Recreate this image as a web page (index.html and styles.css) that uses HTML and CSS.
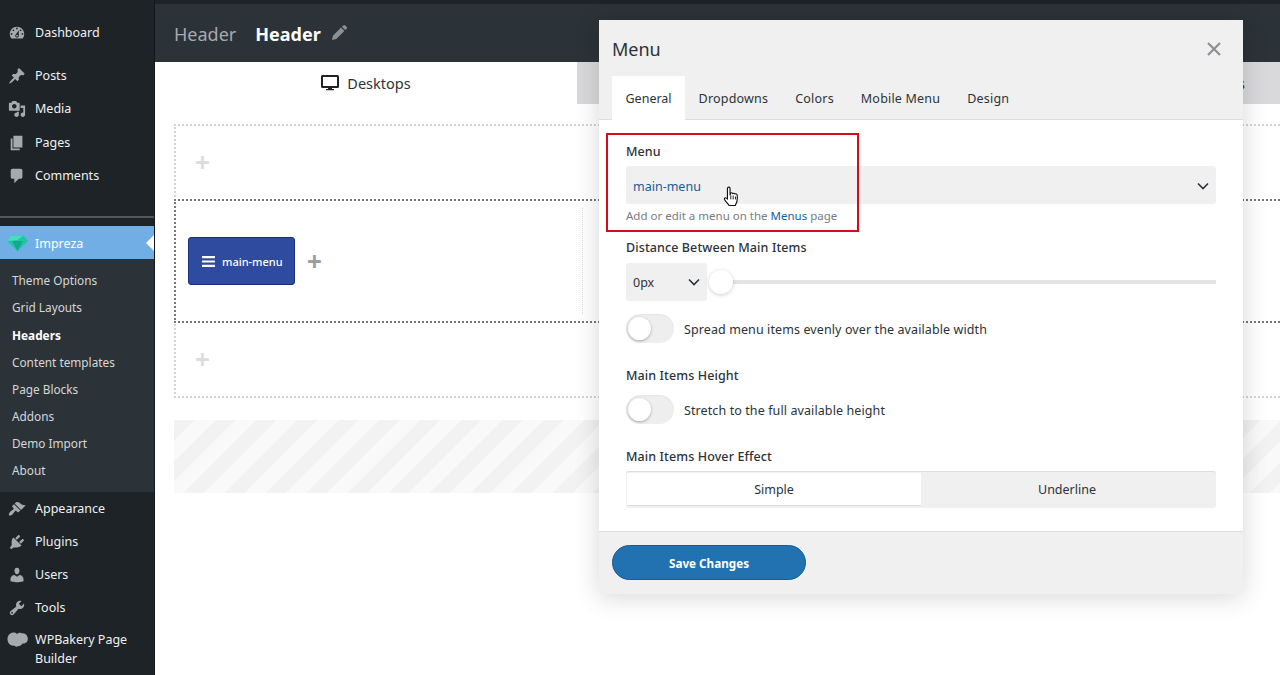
FILE: index.html
```html
<!DOCTYPE html>
<html lang="en">

<head>
    <meta charset="UTF-8">
    <meta name="viewport" content="width=device-width, initial-scale=1.0">
    <title>Header</title>
    <link rel="stylesheet" href="styles.css">
</head>

<body>
    <aside class="sidebar">
        <a class="menu-item dash"><svg class="icon" viewBox="0 0 20 20"><path d="M3.76 16h12.48c1.1-1.37 1.76-3.11 1.76-5 0-4.42-3.58-8-8-8s-8 3.58-8 8c0 1.89.66 3.63 1.76 5zM10 4c.55 0 1 .45 1 1s-.45 1-1 1-1-.45-1-1 .45-1 1-1zM6 6c.55 0 1 .45 1 1s-.45 1-1 1-1-.45-1-1 .45-1 1-1zm8 0c.55 0 1 .45 1 1s-.45 1-1 1-1-.45-1-1 .45-1 1-1zm-5.37 5.55L12 7v6c0 1.1-.9 2-2 2s-2-.9-2-2c0-.57.24-1.08.63-1.45zM4 10c.55 0 1 .45 1 1s-.45 1-1 1-1-.45-1-1 .45-1 1-1zm12 0c.55 0 1 .45 1 1s-.45 1-1 1-1-.45-1-1 .45-1 1-1zm-5 3c0-.55-.45-1-1-1s-1 .45-1 1 .45 1 1 1 1-.45 1-1z" fill-rule="evenodd"/></svg>Dashboard</a>
        <a class="menu-item"><svg class="icon" viewBox="0 0 20 20"><path d="M10.44 3.02l1.82-1.82 6.36 6.35-1.83 1.82c-1.05-.68-2.48-.57-3.41.36l-.75.75c-.92.93-1.04 2.35-.35 3.41l-1.83 1.82-2.41-2.41-2.8 2.79c-.42.42-3.38 2.71-3.8 2.29s1.86-3.39 2.28-3.81l2.79-2.79L4.1 9.36l1.83-1.82c1.05.69 2.48.57 3.4-.36l.75-.75c.93-.92 1.05-2.35.36-3.41z"/></svg>Posts</a>
        <a class="menu-item"><svg class="icon" viewBox="0 0 20 20"><path d="M13 11V4c0-.55-.45-1-1-1h-1.67L9 1H5L3.67 3H2c-.55 0-1 .45-1 1v7c0 .55.45 1 1 1h10c.55 0 1-.45 1-1zM7 4.500c1.38 0 2.500 1.120 2.500 2.500S8.380 9.500 7 9.500 4.500 8.380 4.500 7 5.620 4.500 7 4.500zM14 6h5v10.500c0 1.380-1.120 2.500-2.500 2.500S14 17.880 14 16.500s1.120-2.500 2.500-2.500c.17 0 .34.02.5.05V9h-3V6zm-4 8.050V13h2v3.500c0 1.380-1.120 2.500-2.500 2.500S7 17.880 7 16.500 8.120 14 9.500 14c.17 0 .34.02.5.05z"/></svg>Media</a>
        <a class="menu-item pages"><svg class="icon" viewBox="0 0 20 20"><path d="M6 15V2h10v13H6zm-1 1h8v2H3V5h2v11z"/></svg>Pages</a>
        <a class="menu-item"><svg class="icon" viewBox="0 0 20 20"><path d="M5 2h9c1.1 0 2 .9 2 2v7c0 1.1-.9 2-2 2h-2l-5 5v-5H5c-1.1 0-2-.9-2-2V4c0-1.1.9-2 2-2z"/></svg>Comments</a>
        <div class="menu-sep"></div>
        <a class="menu-item current">
            <svg class="icon gem" viewBox="0 0 20 20" preserveAspectRatio="none"><path d="M4 1h12l4 6-10 12L0 7z" fill="#1fc7a6"/><path d="M5 1h10l-5 5zM0 7l4-6 1 0 5 5z" fill="#4adcc0"/><path d="M10 19L5 7h10z" fill="#12a98f"/></svg>Impreza</a>
        <ul class="submenu">
            <li>Theme Options</li>
            <li>Grid Layouts</li>
            <li class="active">Headers</li>
            <li>Content templates</li>
            <li>Page Blocks</li>
            <li>Addons</li>
            <li>Demo Import</li>
            <li>About</li>
        </ul>
        <a class="menu-item"><svg class="icon" viewBox="0 0 20 20"><path d="M14.48 11.06L7.41 3.99l1.5-1.5c.5-.56 2.3-.47 3.51.32 1.21.8 1.43 1.28 2.91 2.1 1.18.64 2.45 1.26 4.45.85zm-.71.71L6.7 4.7 4.93 6.47c-.39.39-.39 1.02 0 1.41l1.06 1.06c.39.39.39 1.03 0 1.42-.6.6-1.43 1.11-2.21 1.69-.35.26-.7.53-1.01.84-1.43 1.43-2.3 3.5-1.6 4.2s2.77-.17 4.2-1.6c.31-.31.58-.66.84-1.01.58-.78 1.09-1.61 1.69-2.21.39-.39 1.03-.39 1.42 0l1.06 1.06c.39.39 1.02.39 1.41 0z"/></svg>Appearance</a>
        <a class="menu-item"><svg class="icon" viewBox="0 0 20 20"><path d="M13.11 4.36L9.87 7.6 8 5.73l3.24-3.24c.35-.34 1.05-.2 1.56.32.52.51.66 1.21.31 1.55zm-8 1.77l.91-1.12 9.01 9.01-1.19.84c-.71.71-2.63 1.16-3.82 1.16H6.14L4.9 17.26c-.59.59-1.54.59-2.12 0-.59-.58-.59-1.53 0-2.12l1.24-1.24v-3.88c0-1.13.4-3.19 1.09-3.89zm7.26 3.97l3.24-3.24c.34-.35 1.04-.21 1.55.31.52.51.66 1.21.31 1.55l-3.24 3.25z"/></svg>Plugins</a>
        <a class="menu-item"><svg class="icon" viewBox="0 0 20 20"><path d="M10 9.25c-2.27 0-2.73-3.44-2.73-3.44C7 4.02 7.82 2 9.97 2c2.16 0 2.98 2.02 2.71 3.81 0 0-.41 3.44-2.68 3.44zm0 2.57L12.72 10c2.39 0 4.52 2.33 4.52 4.53v2.49s-3.65 1.13-7.24 1.13c-3.65 0-7.24-1.13-7.24-1.13v-2.49c0-2.25 1.94-4.48 4.47-4.48z"/></svg>Users</a>
        <a class="menu-item"><svg class="icon" viewBox="0 0 20 20"><path d="M16.68 9.77c-1.34 1.34-3.3 1.67-4.95.99l-5.41 6.52c-.99.99-2.59.99-3.58 0s-.99-2.59 0-3.57l6.52-5.42c-.68-1.65-.35-3.61.99-4.95 1.28-1.28 3.12-1.62 4.72-1.06l-2.89 2.89 2.82 2.82 2.86-2.87c.53 1.58.18 3.39-1.08 4.65zM3.81 16.21c.4.39 1.04.39 1.43 0 .4-.4.4-1.04 0-1.43-.39-.4-1.03-.4-1.43 0-.39.39-.39 1.03 0 1.43z"/></svg>Tools</a>
        <a class="menu-item tall"><svg class="icon cloud" viewBox="0 0 21 17"><path d="M4.500 1C6.500.2 8.500.6 10 2c1.300-1.300 3.500-1.800 5-.8 1.800-.3 3.800.6 4.800 2.200 1.300 2 1.400 4.300.3 6-1 1.600-2.800 2.300-4.600 2-1 1.800-2.800 2.800-4.500 2.800-1.600.9-3 .4-4-.6-2 .2-4.200-.6-5.300-2.300C.4 9.300.2 7 .8 5 1.300 3 2.700 1.600 4.500 1z"/></svg><span>WPBakery Page<br>Builder</span></a>
    </aside>

    <main class="content">
        <header class="page-head">
            <span class="head-label">Header</span>
            <strong class="head-title">Header</strong>
            <svg class="pencil" viewBox="0 0 16 16"><path d="M11.600 1.300a1.200 1.200 0 0 1 1.700 0l1.400 1.400a1.200 1.200 0 0 1 0 1.700l-1.300 1.300-3.100-3.100zM9.500 3.400l3.100 3.100-7.700 7.700-4 .9.900-4z"/></svg>
        </header>

        <div class="state-tabs">
            <div class="state-tab selected">
                <svg class="monitor" viewBox="0 0 18 16"><path d="M1.500 1h15a.5.5 0 0 1 .5.5v10a.5.500 0 0 1-.5.5h-15a.5.500 0 0 1-.5-.5v-10a.5.500 0 0 1 .5-.5z" fill="none" stroke="#1d2327" stroke-width="2"/><path d="M7 12.500h4v1.500h2v1.300H5V14h2z" fill="#1d2327"/></svg>
                Desktops
            </div>
            <div class="state-tab other">Tablets</div>
        </div>

        <div class="builder">
            <div class="row"><span class="plus faint">+</span></div>
            <div class="row middle">
                <div class="cell">
                    <div class="element">
                        <svg class="burger" viewBox="0 0 14 12"><path d="M0 0h14v2.400H0zM0 4.800h14v2.400H0zM0 9.600h14V12H0z"/></svg>
                        main-menu
                    </div>
                    <span class="plus">+</span>
                </div>
            </div>
            <div class="row"><span class="plus faint">+</span></div>
            <div class="stripes"></div>
        </div>
    </main>

    <section class="modal">
        <div class="modal-head">
            <h2>Menu</h2>
            <svg class="close" viewBox="0 0 14 14"><path d="M1 1l12 12M13 1L1 13" stroke="#8c8f94" stroke-width="2.200" fill="none"/></svg>
        </div>
        <nav class="modal-tabs">
            <a class="tab on">General</a>
            <a class="tab">Dropdowns</a>
            <a class="tab">Colors</a>
            <a class="tab">Mobile Menu</a>
            <a class="tab">Design</a>
        </nav>

        <div class="modal-body">
            <div class="field menu-field">
                <label>Menu</label>
                <div class="select wide">
                    <span class="link">main-menu</span>
                    <svg class="chev" viewBox="0 0 12 8"><path d="M1 1.500l5 5 5-5" stroke="#2c3338" stroke-width="1.600" fill="none"/></svg>
                </div>
                <p class="help">Add or edit a menu on the <span class="link">Menus</span> page</p>
            </div>

            <div class="field distance">
                <label>Distance Between Main Items</label>
                <div class="slider-row">
                    <div class="select small">
                        <span>0px</span>
                        <svg class="chev" viewBox="0 0 12 8"><path d="M1 1.500l5 5 5-5" stroke="#2c3338" stroke-width="1.600" fill="none"/></svg>
                    </div>
                    <div class="slider"><span class="thumb"></span></div>
                </div>
                <div class="switch-row first"><span class="switch"></span><span class="switch-text">Spread menu items evenly over the available width</span></div>
            </div>

            <div class="field height">
                <label>Main Items Height</label>
                <div class="switch-row"><span class="switch"></span><span class="switch-text">Stretch to the full available height</span></div>
            </div>

            <div class="field hover">
                <label>Main Items Hover Effect</label>
                <div class="segments">
                    <span class="seg on">Simple</span>
                    <span class="seg">Underline</span>
                </div>
            </div>
        </div>

        <div class="modal-foot">
            <button type="button">Save Changes</button>
        </div>
    </section>

    <!-- red marker and mouse pointer lie over the modal -->
    <div class="marker"></div>
    <svg class="pointer" viewBox="0 0 18 24"><path d="M6 1.500c1 0 1.500.8 1.500 1.600V10l.5-2c.8-.8 2-.5 2.300.4.800-.7 2-.4 2.300.5.900-.6 2.200-.2 2.400 1 .3 2 .3 4.500-.2 6.600-.4 1.700-1.300 3-1.800 4.500H6.500c-1-2-3-3.500-4.600-5.800-.6-.9-.5-1.800.1-2.200.7-.5 1.700 0 2.700 1.200V3.100c0-.8.500-1.600 1.300-1.600z" fill="#fff" stroke="#111" stroke-width="1.200" stroke-linejoin="round"/><path d="M8.300 10.500v4M10.800 10.500v4M13.300 11.500v3" stroke="#111" stroke-width="1"/></svg>
</body>

</html>
```

FILE: styles.css
```css
* {
    box-sizing: border-box;
}

html,
body {
    height: 100%;
}

body {
    margin: 0;
    display: flex;
    overflow: hidden;
    font-family: "Noto Sans", Arial, sans-serif;
    font-size: 12.500px;
    color: #2c3338;
    background: #fff;
}

/* admin menu */
.sidebar {
    width: 155px;
    flex-shrink: 0;
    padding-top: 16px;
    background: #1d2327;
    color: #f0f0f1;
    border-right: 1px solid #14181b;
}

.menu-item {
    display: flex;
    align-items: center;
    height: 33px;
    padding-left: 8px;
    gap: 9px;
}

.menu-item.dash {
    margin-bottom: 10px;
}

.menu-item.pages {
    margin-top: 1px;
}

.menu-item.tall {
    height: 50px;
    line-height: 18.500px;
    align-items: flex-start;
    padding-top: 7px;
}

.icon {
    width: 18px;
    height: 18px;
    flex-shrink: 0;
    fill: #a7aaad;
}

.icon.gem {
    width: 21px;
    height: 17px;
    margin: 0 -2px 0 -1px;
}

.icon.cloud {
    width: 21px;
    height: 17px;
    margin: 1px -2px 0 -1px;
}

.menu-sep {
    height: 2px;
    margin-top: 24px;
    margin-bottom: 8px;
    background: #50565a;
}

.menu-item.current {
    position: relative;
    padding-top: 1px;
    background: #72aee6;
    color: #fff;
}

.menu-item.current::after {
    content: "";
    position: absolute;
    right: 0;
    top: 9px;
    border: 8px solid transparent;
    border-right-color: #fff;
    border-left-width: 0;
}

.submenu {
    list-style: none;
    margin: 0;
    padding: 8px 0 7.500px 12px;
    background: #2c3338;
    color: #d5d7d9;
    font-size: 11.800px;
}

.submenu li {
    height: 27.200px;
    line-height: 27.200px;
}

.submenu .active {
    color: #fff;
    font-weight: 700;
    line-height: 28.500px;
}

/* page */
.content {
    flex: 1;
    min-width: 0;
    border-top: 4px solid #1d2327;
}

.page-head {
    display: flex;
    align-items: center;
    height: 58px;
    padding: 1px 0 0 19px;
    background: #2c3338;
    font-size: 18px;
}

.head-label {
    color: #a7aaad;
}

.head-title {
    margin-left: 19px;
    color: #fff;
}

.pencil {
    width: 17px;
    height: 17px;
    margin: -2px 0 0 10px;
    fill: #8c8f94;
}

.state-tabs {
    display: flex;
    height: 42px;
    font-size: 14.500px;
}

.state-tab {
    display: flex;
    align-items: center;
}

.state-tab.selected {
    width: 422px;
    justify-content: center;
    gap: 8px;
}

.state-tab.other {
    flex: 1;
    justify-content: flex-end;
    padding-right: 35px;
    background: #d9d9db;
}

.monitor {
    width: 18px;
    height: 16px;
}

.builder {
    padding: 20px 0 0 19px;
}

.row {
    display: flex;
    align-items: center;
    height: 77px;
    padding-left: 19px;
    border: 2px dotted #d4d4d4;
    border-right: 0;
}

.row.middle {
    position: relative;
    height: 124px;
    margin: -2px 0;
    padding-left: 12px;
    border-color: #777;
}

.cell {
    display: flex;
    align-items: center;
    gap: 12px;
    width: 395px;
    height: 107px;
    border-right: 1px dotted #ddd;
}

.element {
    display: flex;
    align-items: center;
    gap: 7px;
    width: 107px;
    height: 48px;
    padding-left: 13px;
    background: #2f4b9f;
    border: 1px solid #1b2f7d;
    border-radius: 3px;
    color: #fff;
    font-size: 11px;
    font-weight: 500;
}

.burger {
    width: 13px;
    height: 11px;
    fill: #fff;
}

.plus {
    font-size: 26px;
    font-weight: 700;
    line-height: 1;
    color: #9a9da1;
}

.plus.faint {
    margin-bottom: 2px;
    color: #dcdcdc;
}

.stripes {
    height: 73px;
    margin-top: 22px;
    background: repeating-linear-gradient(135deg, #f2f2f2 0, #f2f2f2 14.500px, #f9f9f9 14.500px, #f9f9f9 29px);
}

/* menu settings modal */
.modal {
    position: absolute;
    left: 599px;
    top: 20px;
    width: 644px;
    height: 574px;
    display: flex;
    flex-direction: column;
    background: #fff;
    box-shadow: 0 3px 24px rgba(0, 0, 0, 0.16);
}

.modal-head {
    display: flex;
    align-items: center;
    justify-content: space-between;
    height: 56px;
    padding: 2px 22px 0 13px;
    background: #f0f0f0;
}

.modal-head h2 {
    margin: 0;
    font-size: 18px;
    font-weight: 400;
}

.close {
    width: 14px;
    height: 14px;
}

.modal-tabs {
    display: flex;
    height: 44px;
    padding-left: 13px;
    background: #f0f0f0;
    border-bottom: 1px solid #ddd;
}

.tab {
    display: flex;
    align-items: center;
    height: 44px;
    padding: 0 13.500px;
    letter-spacing: 0.2px;
}

.tab.on {
    background: #fff;
    letter-spacing: 0;
}

.modal-body {
    flex: 1;
    padding: 22px 27px 0;
}

.field label {
    display: block;
    font-weight: 500;
    line-height: 18px;
    margin-bottom: 6px;
    letter-spacing: 0.1px;
}

.menu-field {
    padding-top: 1px;
}

.menu-field label {
    margin-bottom: 5px;
}

.select {
    display: flex;
    align-items: center;
    justify-content: space-between;
    height: 38px;
    padding: 0 7px;
    background: #f0f0f0;
    border-radius: 3px;
}

.select.wide {
    padding-top: 2px;
}

.select.small {
    width: 81px;
    flex-shrink: 0;
}

.chev {
    width: 12px;
    height: 8px;
}

.link {
    color: #135e96;
}

.help {
    margin: 3px 0 0;
    line-height: 17px;
    font-size: 11.500px;
    color: #787c82;
}

.distance {
    margin-top: 15px;
}

.slider-row {
    display: flex;
    align-items: center;
}

.slider {
    position: relative;
    flex: 1;
    height: 4px;
    margin-left: 14px;
    background: #e4e4e4;
}

.thumb {
    position: absolute;
    left: -12px;
    top: -10px;
    width: 24px;
    height: 24px;
    border-radius: 50%;
    background: #fff;
    box-shadow: 0 1px 4px rgba(0, 0, 0, 0.2);
}

.switch-row {
    display: flex;
    align-items: center;
    gap: 10px;
    height: 29px;
}

.switch-row.first {
    margin-top: 13px;
}

.switch-text {
    padding-top: 2px;
    letter-spacing: 0.1px;
}

.switch {
    position: relative;
    width: 48px;
    height: 29px;
    border-radius: 15px;
    background: #eee;
    box-shadow: inset 0 1px 2px rgba(0, 0, 0, 0.04);
}

.switch::after {
    content: "";
    position: absolute;
    left: 2px;
    top: 3px;
    width: 23px;
    height: 23px;
    border-radius: 50%;
    background: #fff;
    box-shadow: 0 1px 3px rgba(0, 0, 0, 0.3);
}

.height {
    margin-top: 24px;
}

.height label {
    margin-bottom: 10px;
}

.hover {
    margin-top: 24px;
}

.hover label {
    margin-bottom: 5px;
}

.segments {
    display: flex;
    height: 37px;
    padding: 1px 0 2px 1px;
    background: #f0f0f0;
    border-radius: 3px;
    border-top: 1px solid #ddd;
}

.seg {
    flex: 1;
    display: flex;
    align-items: center;
    justify-content: center;
    padding-right: 3px;
}

.seg.on {
    flex: 0 0 294px;
    padding-right: 0;
    background: #fff;
    border-bottom: 1px solid #ddd;
}

.modal-foot {
    height: 63px;
    padding-top: 13px;
    padding-left: 13px;
    background: #f0f0f0;
    border-top: 1px solid #ddd;
}

.modal-foot button {
    width: 194px;
    height: 35px;
    background: #2271b1;
    border: 1px solid #135e96;
    border-radius: 18px;
    color: #fff;
    font: 700 11.700px "Noto Sans", Arial, sans-serif;
}

.marker {
    position: absolute;
    left: 606px;
    top: 133px;
    width: 253px;
    height: 99px;
    border: 2px solid #d9091c;
}

.pointer {
    position: absolute;
    left: 723px;
    top: 185px;
    width: 17px;
    height: 24px;
}
```
